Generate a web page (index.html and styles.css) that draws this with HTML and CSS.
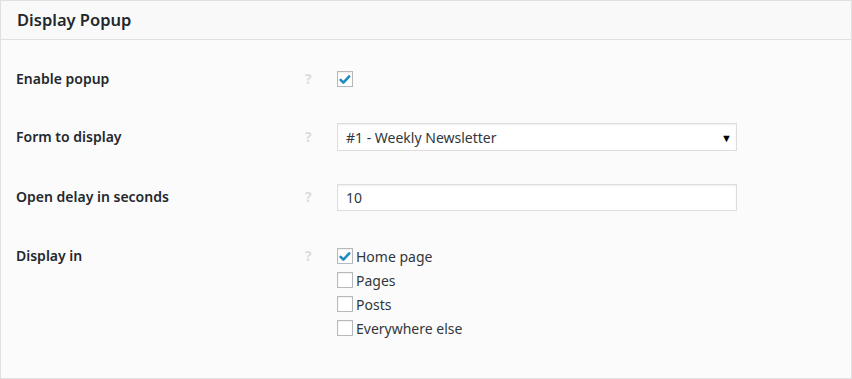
FILE: index.html
```html
<!DOCTYPE html>
<html lang="en">
<head>
    <meta charset="UTF-8">
    <meta name="viewport" content="width=device-width, initial-scale=1.0">
    <title>Display Popup</title>
    <link rel="stylesheet" href="styles.css">
</head>
<body>
    <div class="panel">
        <h2 class="panel-title">Display Popup</h2>

        <div class="panel-body">
            <div class="row row-first">
                <div class="label">Enable popup</div>
                <div class="help">?</div>
                <div class="field">
                    <span class="checkbox checked">
                        <svg viewBox="0 0 16 16" width="16" height="16"><path d="M3.6 8.8 L6.4 11.6 L12.2 5.4" fill="none" stroke="#1e8cbe" stroke-width="2.6" stroke-linecap="round" stroke-linejoin="round"/></svg>
                    </span>
                </div>
            </div>

            <div class="row">
                <div class="label">Form to display</div>
                <div class="help">?</div>
                <div class="field">
                    <div class="select">
                        <span>#1 - Weekly Newsletter</span>
                        <span class="arrow">&#9660;</span>
                    </div>
                </div>
            </div>

            <div class="row row-delay">
                <div class="label">Open delay in seconds</div>
                <div class="help">?</div>
                <div class="field">
                    <div class="text-input">10</div>
                </div>
            </div>

            <div class="row row-list">
                <div class="label">Display in</div>
                <div class="help">?</div>
                <div class="field">
                    <ul class="check-list">
                        <li>
                            <span class="checkbox checked">
                                <svg viewBox="0 0 16 16" width="16" height="16"><path d="M3.6 8.8 L6.4 11.6 L12.2 5.4" fill="none" stroke="#1e8cbe" stroke-width="2.6" stroke-linecap="round" stroke-linejoin="round"/></svg>
                            </span>
                            Home page
                        </li>
                        <li><span class="checkbox"></span> Pages</li>
                        <li><span class="checkbox"></span> Posts</li>
                        <li><span class="checkbox"></span> Everywhere else</li>
                    </ul>
                </div>
            </div>
        </div>
    </div>
</body>
</html>
```

FILE: styles.css
```css
body {
    margin: 0;
    font-family: 'Noto Sans', 'Open Sans', sans-serif;
    font-size: 14px;
    color: #32373c;
    background: #fff;
}

.panel {
    width: 850px;
    height: 377px;
    border: 1px solid #e0e0e0;
    background: #fbfbfb;
}

.panel-title {
    margin: 0;
    height: 38px;
    line-height: 38px;
    padding: 0 16px;
    font-size: 16.5px;
    font-weight: 600;
    color: #23282d;
    background: #f9f9f9;
    border-bottom: 1px solid #e0e0e0;
}

.panel-body {
    padding-top: 10px;
}

.row {
    display: grid;
    grid-template-columns: 289px 32px 400px;
    align-items: center;
    padding: 15px 15px;
}

.row-delay {
    padding: 17px 15px;
}

.row-list {
    align-items: start;
    padding: 16px 15px;
}

.label {
    font-weight: 600;
    color: #23282d;
    line-height: 24px;
}

.field {
    min-height: 28px;
    display: flex;
    align-items: center;
}

.help {
    font-size: 14px;
    font-weight: 700;
    color: #dcdcdc;
    line-height: 24px;
}

.checkbox {
    display: inline-block;
    width: 16px;
    height: 16px;
    box-sizing: border-box;
    border: 1px solid #b4b9be;
    background: #fff;
    box-shadow: inset 0 1px 2px rgba(0,0,0,0.07);
    position: relative;
    flex-shrink: 0;
}

.checkbox svg {
    position: absolute;
    left: -1px;
    top: -1px;
}

.select,
.text-input {
    width: 400px;
    height: 28px;
    box-sizing: border-box;
    border: 1px solid #ddd;
    background: #fff;
    box-shadow: inset 0 1px 2px rgba(0,0,0,0.07);
    padding: 0 4px 0 8px;
    display: flex;
    align-items: center;
    justify-content: space-between;
    color: #32373c;
}

.text-input {
    height: 27px;
}

.arrow {
    font-size: 11px;
    color: #000;
}

.check-list {
    list-style: none;
    margin: 0;
    padding: 0;
}

.check-list li {
    display: flex;
    align-items: center;
    gap: 3px;
    height: 24px;
}
```
